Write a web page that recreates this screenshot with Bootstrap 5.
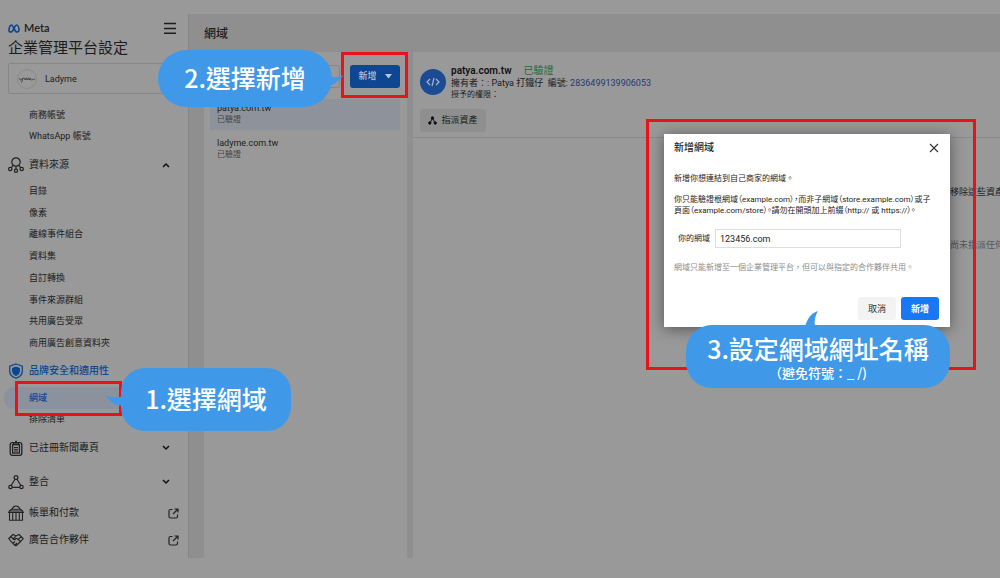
<!DOCTYPE html>
<html lang="zh-Hant">
<head>
<meta charset="utf-8">
<meta name="viewport" content="width=device-width, initial-scale=1">
<title>企業管理平台設定</title>
<link href="https://cdn.jsdelivr.net/npm/bootstrap@5.3.0/dist/css/bootstrap.min.css" rel="stylesheet">
<script src="https://cdn.jsdelivr.net/npm/bootstrap@5.3.0/dist/js/bootstrap.bundle.min.js"></script>
<style>
  :root { --panel:#999; --gutter:#8f8f8f; --ink:#1c1c1c; --navy:#0e4791; --bubble:#3f99e8; --mark-red:#e8121a; }
  body { background:var(--panel); color:var(--ink); font-family:Roboto,"Noto Sans CJK TC",sans-serif; font-size:9px; line-height:12px; min-height:100vh; overflow-x:hidden; }
  a { color:inherit; text-decoration:none; }
  svg { display:block; flex:none; }
  .app-shell { padding:14px 0 20px; min-height:100vh; }
  .side { flex:0 0 189px; padding:0 0 0 8px; border-right:1px solid #868686; }
  .brand-row { height:24px; }
  .brand-name { font-size:11px; font-weight:600; font-family:Lato,sans-serif; }
  .side h1 { font-size:15px; line-height:20px; font-weight:400; margin:0 0 5px; }
  .account { height:31px; margin-right:8px; border:1px solid #868686; border-radius:2px; font-size:9px; }
  .avatar { width:20px; height:20px; border:1px solid #8a8a8a; border-radius:50%; }
  .sec { font-size:10px; height:24px; padding-right:18px; gap:5px; }
  .sec.ext { padding-right:9px; }
  .sec.gap-l { margin-top:10px; }
  .sec.gap-m { margin-top:7px; }
  .sec.gap-s { margin-top:3px; }
  .sub { margin:0; padding:0; list-style:none; display:grid; grid-auto-rows:1fr; }
  .sub a { display:flex; align-items:center; height:100%; padding-left:21px; }
  .sub.accounts { height:43px; margin-top:10px; margin-bottom:6px; }
  .sub.sources { height:174px; margin-top:3px; margin-bottom:5px; }
  .sub.safety { height:43px; margin-top:4px; margin-bottom:6px; }
  .sub .chosen { position:relative; }
  .sub .chosen > a { background:#8c929d; color:var(--navy); font-weight:500; margin-left:-4px; padding-left:25px; border-radius:10px 0 0 10px; }
  .navy { color:var(--navy); font-weight:500; }
  .workspace { background:var(--gutter); min-width:0; padding-left:15px; }
  .workspace h2 { font-size:12px; line-height:18px; font-weight:500; margin:11px 0 9px; }
  .pane { background:var(--panel); }
  .list-pane { flex:0 0 203px; }
  .tools { padding:13px 7px 0 6px; height:47px; }
  .search { height:23px; border:1px solid #868686; background:transparent; min-width:0; margin-right:10px; border-radius:3px; }
  .add-btn { width:50px; height:23px; border-radius:3px; background:var(--navy); color:#b9c4d4; font-size:9px; font-weight:500; padding:0; border:0; }
  .dom { margin:0 7px 4px 6px; padding:4px 7px 0; height:31px; font-size:9px; line-height:11px; }
  .dom small { font-size:8px; display:block; color:#444; }
  .dom.on { background:#8e939b; }
  .detail { min-width:0; margin-left:6px; }
  .detail-head { padding:13px 7px 5px; border-bottom:1px solid #8a8a8a; }
  .disc { width:26px; height:26px; border-radius:50%; background:#1c4b93; margin-right:5px; }
  .dom-name { font-size:10px; font-weight:600; color:#111; }
  .verified { font-size:10px; color:#1d6a3c; }
  .idnum { color:#26386f; }
  .perm { font-size:8px; }
  .assign { height:23px; width:66px; font-size:9px; background:var(--gutter); border:0; border-radius:3px; padding:0; color:var(--ink); margin-top:8px; }
  .detail-side { width:50px; white-space:nowrap; margin-left:auto; padding-top:48px; }
  .detail-side p { margin:0 0 41px; }
  .detail-side .faint { color:#555; }
  .frame { position:absolute; border:3px solid var(--mark-red); pointer-events:none; z-index:5; }
  .frame.f1 { inset:-6px 66px -7px 7px; }
  .frame.f2 { inset:-13px -8px -10px -9px; }
  .frame.f3 { inset:-15px -26px -43px -18px; }
  .bubble { position:absolute; z-index:6; background:var(--bubble); color:#fff; font:500 25px/34px "Noto Sans CJK TC",sans-serif; white-space:nowrap; text-align:center; }
  .bubble svg { position:absolute; fill:var(--bubble); }
  .b1 { left:113px; top:-19px; width:170px; height:63px; border-radius:24px; padding-top:13px; }
  .b1 svg { left:-16px; top:26px; }
  .b2 { right:68px; top:-15px; width:174px; height:57px; border-radius:29px; padding-top:10px; }
  .b2 svg { right:-12px; top:20px; }
  .b3 { left:22px; top:191px; width:264px; height:63px; border-radius:26px; padding-top:6px; }
  .b3 svg { left:119px; top:-14px; }
  .bubble-note { font-size:13px; line-height:16px; }
  .dialog-box { position:absolute; z-index:4; right:50px; top:134px; width:286px; height:193px; background:#fff; box-shadow:0 2px 14px rgba(0,0,0,.45); font-size:8px; line-height:11px; padding:6px 11px 7px 10px; }
  .dialog-box h3 { font-size:10px; line-height:16px; font-weight:500; margin:0; }
  .dialog-box p { margin:0 0 13px; white-space:nowrap; }
  .dialog-box .rules { font-feature-settings:"palt"; }
  .dialog-box .intro { margin:17px 0 10px; }
  .dialog-box .hint { color:#8c8c8c; margin-top:14px; }
  .field { height:19px; width:186px; border:1px solid #ddd; font-size:9px; padding:0 4px; color:var(--ink); margin-left:5px; }
  .dlg-actions { gap:5px; }
  .dlg-btn { width:38px; height:23px; border:0; border-radius:3px; font-size:9px; line-height:12px; padding:0; }
  .dlg-btn.cancel { background:#f3f3f3; color:#333; }
  .dlg-btn.add { background:#1877f2; color:#fff; font-weight:700; }
</style>
</head>
<body>
<div class="app-shell d-flex position-relative">
  <nav class="side" aria-label="設定">
    <div class="brand-row d-flex justify-content-between align-items-center pt-1 pe-2">
      <div class="d-flex align-items-center gap-1">
        <svg width="12" height="9" viewBox="0 0 12 9" fill="none" stroke="#0b4590" stroke-width="1.6"><path d="M1 6.500C1 3.500 2.200 1 3.500 1C5.500 1 6.500 8 8.800 8C10.200 8 11 7.500 11 6C11 3.500 9.800 1 8.400 1C6.500 1 5.500 8 2.800 8C1.600 8 1 7.500 1 6.500Z"/></svg>
        <span class="brand-name">Meta</span>
      </div>
      <button class="btn p-0 border-0 me-1" aria-label="選單"><svg width="12" height="12" viewBox="0 0 12 12" stroke="#1c1c1c" stroke-width="1.500"><path d="M0 1.500H12M0 6.500H12M0 11.200H12"/></svg></button>
    </div>
    <h1>企業管理平台設定</h1>
    <a href="#" class="account d-flex align-items-center">
      <span class="avatar d-flex align-items-center justify-content-center ms-2 me-1"><svg width="16" height="8" viewBox="0 0 16 8" fill="none" stroke="#333" stroke-width=".8"><path d="M0 3C1 6 3 5 3.500 3C3.500 6 3 7.500 2 7M4 4C5 2 6 3 6 5C7 2 8 3 8 5C9 2 10 3 10 5C11 2 12 3 11 4C12 6 14 4 16 4"/></svg></span>
      <span class="ms-1">Ladyme</span>
    </a>
    <ul class="sub accounts">
      <li><a href="#">商務帳號</a></li>
      <li><a href="#">WhatsApp 帳號</a></li>
    </ul>
    <a href="#" class="sec d-flex align-items-center">
      <svg width="16" height="16" viewBox="0 0 16 16" fill="none" stroke="#222" stroke-width="1.200"><circle cx="8" cy="5" r="4.200"/><circle cx="2.300" cy="12" r="1.700"/><circle cx="13.700" cy="12" r="1.700"/><circle cx="8" cy="13.800" r="1.600"/><path d="M5 8.200L3.500 10.600M11 8.200L12.500 10.600M8 9.300V12"/></svg>
      <span class="flex-fill">資料來源</span>
      <svg width="8" height="6" viewBox="0 0 8 6" fill="none" stroke="#111" stroke-width="1.500"><path d="M1 5L4 2L7 5"/></svg>
    </a>
    <ul class="sub sources">
      <li><a href="#">目錄</a></li>
      <li><a href="#">像素</a></li>
      <li><a href="#">離線事件組合</a></li>
      <li><a href="#">資料集</a></li>
      <li><a href="#">自訂轉換</a></li>
      <li><a href="#">事件來源群組</a></li>
      <li><a href="#">共用廣告受眾</a></li>
      <li><a href="#">商用廣告創意資料夾</a></li>
    </ul>
    <a href="#" class="sec navy d-flex align-items-center">
      <svg width="16" height="16" viewBox="0 0 16 16"><path d="M8 1L14.300 3.200V8C14.300 11.500 11.500 14 8 15.200C4.500 14 1.700 11.500 1.700 8V3.200Z" fill="none" stroke="#0e4791" stroke-width="1.300"/><path d="M8 3.500L12 5V8C12 10.500 10 12.200 8 13C6 12.200 4 10.500 4 8V5Z" fill="#0e4791"/></svg>
      <span class="flex-fill">品牌安全和適用性</span>
    </a>
    <ul class="sub safety">
      <li class="chosen"><a href="#" aria-current="page">網域</a>
        <span class="frame f1 border-2"></span>
        <div class="bubble b1"><svg width="20" height="12" viewBox="0 0 20 12"><path d="M1 1C5 4 11 4 20 2V12C12 12 5 9 1 1Z"/></svg>1.選擇網域</div>
      </li>
      <li><a href="#">排除清單</a></li>
    </ul>
    <a href="#" class="sec d-flex align-items-center">
      <svg width="16" height="16" viewBox="0 0 16 16" fill="none" stroke="#222" stroke-width="1.300"><rect x="2.200" y="2.700" width="11.600" height="12.600" rx="2"/><rect x="4.600" y="4.700" width="6.800" height="8.300"/><path d="M5.500 2.500H7L8 .8L9 2.500H10.500V4H5.500ZM6 7.500H10M6 9.300H10M6 11H10" stroke-width="1"/></svg>
      <span class="flex-fill">已註冊新聞專頁</span>
      <svg width="8" height="6" viewBox="0 0 8 6" fill="none" stroke="#111" stroke-width="1.500"><path d="M1 1L4 4L7 1"/></svg>
    </a>
    <a href="#" class="sec gap-l d-flex align-items-center">
      <svg width="16" height="16" viewBox="0 0 16 16" fill="none" stroke="#222" stroke-width="1.200"><circle cx="8" cy="3.500" r="1.900"/><circle cx="2.500" cy="13" r="1.700"/><circle cx="13.500" cy="13" r="1.700"/><path d="M7 5.300L3.300 11.300M9 5.300L12.700 11.300M4.300 13.300H11.700"/></svg>
      <span class="flex-fill">整合</span>
      <svg width="8" height="6" viewBox="0 0 8 6" fill="none" stroke="#111" stroke-width="1.500"><path d="M1 1L4 4L7 1"/></svg>
    </a>
    <a href="#" class="sec ext gap-m d-flex align-items-center">
      <svg width="16" height="16" viewBox="0 0 16 16" fill="none" stroke="#222" stroke-width="1.100"><path d="M.6 7.500C1 5.500 3 4.500 4 4C5 1.500 7 1 8 1C9 1 11 1.500 12 4C13 4.500 15 5.500 15.400 7.500ZM4 4.300H12M2 6H14M1 15.300H15M1.500 7.500V15M4.700 7.500V15M8 7.500V15M11.300 7.500V15M14.500 7.500V15"/></svg>
      <span class="flex-fill">帳單和付款</span>
      <svg width="11" height="11" viewBox="0 0 11 11" fill="none" stroke="#222" stroke-width="1.200"><path d="M4.500 1.500H2.500Q1 1.500 1 3V8.500Q1 10 2.500 10H8Q9.500 10 9.500 8.500V6.500M6.500 1H10V4.500M10 1L5 6"/></svg>
    </a>
    <a href="#" class="sec ext gap-s d-flex align-items-center">
      <svg width="16" height="16" viewBox="0 0 16 16" fill="none" stroke="#222" stroke-width="1.100"><path d="M.8 6.500L5 2.500L8 4L11 2.500L15.200 6.500L12.500 9.500L8.500 13.500Q7.500 14.200 6.500 13.200L3 9.500ZM8 4L5 7Q6 8.500 8 6.500L9 6.500L12.500 9.500M3 5L5.500 7M13 5L10.500 7M5 11.500L7 9.500M7 13L9 11"/></svg>
      <span class="flex-fill">廣告合作夥伴</span>
      <svg width="11" height="11" viewBox="0 0 11 11" fill="none" stroke="#222" stroke-width="1.200"><path d="M4.500 1.500H2.500Q1 1.500 1 3V8.500Q1 10 2.500 10H8Q9.500 10 9.500 8.500V6.500M6.500 1H10V4.500M10 1L5 6"/></svg>
    </a>
  </nav>

  <main class="workspace flex-fill d-flex flex-column">
    <h2>網域</h2>
    <div class="d-flex flex-fill">
      <section class="pane list-pane">
        <div class="tools d-flex align-items-start">
          <input class="search flex-fill" type="search" aria-label="搜尋網域">
          <div class="position-relative">
            <button class="btn add-btn d-flex align-items-center justify-content-center gap-2">新增 <svg width="7" height="5" viewBox="0 0 7 5" fill="#b9c4d4"><path d="M0 0H7L3.500 4.500Z"/></svg></button>
            <span class="frame f2"></span>
            <div class="bubble b2"><svg width="20" height="20" viewBox="0 0 20 20"><path d="M0 2C6 9 13 8 20 5C15 10 11 15 0 18Z"/></svg>2.選擇新增</div>
          </div>
        </div>
        <a href="#" class="dom on d-block">patya.com.tw<small>已驗證</small></a>
        <a href="#" class="dom d-block">ladyme.com.tw<small>已驗證</small></a>
      </section>
      <section class="pane detail flex-fill">
        <div class="detail-head">
          <div class="d-flex">
            <span class="disc d-flex align-items-center justify-content-center mt-1"><svg width="14" height="10" viewBox="0 0 14 10" fill="none" stroke="#a9b6cc" stroke-width="1.200"><path d="M4 2L1 5L4 8M10 2L13 5L10 8M8 1L6 9"/></svg></span>
            <div>
              <div class="d-flex align-items-center"><span class="dom-name me-2">patya.com.tw</span><span class="verified ms-1">已驗證</span></div>
              <div>擁有者：: Patya 打鐵仔&nbsp; 編號: <span class="idnum">2836499139906053</span></div>
              <div class="perm">授予的權限：</div>
            </div>
          </div>
          <button class="btn assign d-flex align-items-center justify-content-center gap-1"><svg width="9" height="9" viewBox="0 0 9 9" fill="#111" stroke="#111"><circle cx="4.500" cy="2" r="1.200"/><circle cx="1.800" cy="7" r="1.200"/><circle cx="7.200" cy="7" r="1.200"/><path d="M4.500 2L2 7M4.500 2L7 7" fill="none"/></svg>指派資產</button>
        </div>
        <div class="detail-side">
          <p>移除這些資產</p>
          <p class="faint">尚未指派任何</p>
        </div>
      </section>
    </div>
  </main>

  <div class="dialog-box d-flex flex-column" role="dialog" aria-labelledby="dlg">
    <div class="d-flex justify-content-between align-items-center">
      <h3 id="dlg">新增網域</h3>
      <button class="btn p-0 border-0" aria-label="關閉"><svg width="10" height="10" viewBox="0 0 10 10" stroke="#333" stroke-width="1.100"><path d="M1 1L9 9M9 1L1 9"/></svg></button>
    </div>
    <p class="intro">新增你想連結到自己商家的網域。</p>
    <p class="rules">你只能驗證根網域（example.com），而非子網域（store.example.com）或子<br>頁面（example.com/store）。請勿在開頭加上前綴（http:// 或 https://）。</p>
    <div class="d-flex align-items-center ms-1">
      <label for="domain">你的網域</label>
      <input id="domain" class="field" type="text" value="123456.com">
    </div>
    <p class="hint">網域只能新增至一個企業管理平台，但可以與指定的合作夥伴共用。</p>
    <div class="dlg-actions d-flex justify-content-end mt-auto">
      <button class="btn dlg-btn cancel">取消</button>
      <button class="btn dlg-btn add">新增</button>
    </div>
    <span class="frame f3"></span>
    <div class="bubble b3"><svg width="14" height="16" viewBox="0 0 14 16"><path d="M0 16C2 8 6 2 13 0C10 5 9 10 10 16Z"/></svg>3.設定網域網址名稱<div class="bubble-note">（避免符號：_ /)</div></div>
  </div>
</div>
</body>
</html>
